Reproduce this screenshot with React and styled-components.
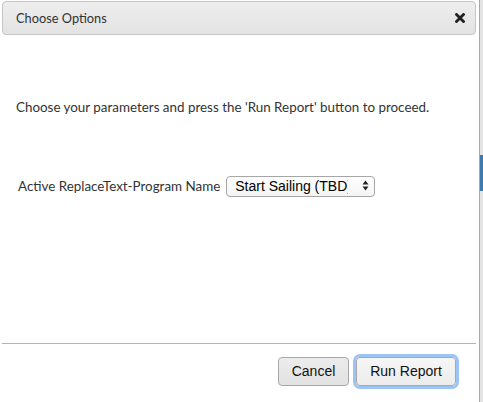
import React from 'react'
import styled, { createGlobalStyle } from 'styled-components'

const uiFont = `Lato, 'Noto Sans', sans-serif`
const systemFont = `'Liberation Sans', Arial, sans-serif`

const GlobalStyle = createGlobalStyle`
  html, body {
    margin: 0;
    padding: 0;
    background: #ffffff;
  }
  body {
    font-family: ${uiFont};
    color: #333333;
  }
`

const Screen = styled.div`
  display: flex;
  width: 483px;
  height: 402px;
  overflow: hidden;
`

const Dialog = styled.div`
  display: flex;
  flex-direction: column;
  width: 480px;
  height: 402px;
  border-right: 1px solid #a9a9a9;
  background: #ffffff;
  box-sizing: border-box;
`

const Backdrop = styled.div`
  flex: 1;
  display: flex;
  flex-direction: column;
  background: #e4e4e4;
`

const BackdropGap = styled.div`
  height: ${(p) => p.h}px;
`

const BackdropBar = styled.div`
  height: ${(p) => p.h}px;
  background: ${(p) => p.color};
`

const TitleBar = styled.div`
  display: flex;
  align-items: center;
  justify-content: space-between;
  height: 32px;
  margin: 1px 3px 0 2px;
  padding: 0 8px 0 13px;
  border: 1px solid #c6c6c6;
  border-radius: 4px;
  background: linear-gradient(#eeeeee, #e3e3e3);
`

const Title = styled.span`
  font-size: 12.8px;
  color: #333333;
`

const CloseButton = styled.button`
  display: flex;
  align-items: center;
  justify-content: center;
  width: 14px;
  height: 14px;
  padding: 0;
  border: 0;
  background: transparent;
  cursor: pointer;
`

const Content = styled.div`
  flex: 1;
  display: flex;
  flex-direction: column;
  gap: 60px;
  padding: 64px 16px 0 16px;
`

const Intro = styled.p`
  margin: 0;
  font-size: 13.4px;
  line-height: 16px;
  color: #333333;
`

const FieldRow = styled.div`
  display: flex;
  align-items: center;
  gap: 6px;
  padding-left: 2px;
`

const FieldLabel = styled.label`
  font-size: 13.4px;
  color: #333333;
`

const SelectWrap = styled.div`
  position: relative;
  width: 149px;
  height: 21px;
`

const Select = styled.select`
  appearance: none;
  width: 100%;
  height: 100%;
  padding: 0 26px 0 8px;
  border: 1px solid #a6a6a6;
  border-radius: 4px;
  background: linear-gradient(#ffffff, #f4f4f4);
  font-family: ${systemFont};
  font-size: 14px;
  color: #000000;
  box-sizing: border-box;
`

const SelectArrows = styled.svg`
  position: absolute;
  right: 6px;
  top: 5px;
  pointer-events: none;
`

const Footer = styled.div`
  display: flex;
  justify-content: flex-end;
  align-items: center;
  gap: 7px;
  height: 54px;
  padding-bottom: 4px;
  margin: 0 3px 0 2px;
  padding-right: 20px;
  border-top: 1px solid #b3b3b3;
`

const Button = styled.button`
  height: 29px;
  padding: 0;
  width: ${(p) => p.w}px;
  border: 1px solid #a8a8a8;
  border-radius: 4px;
  background: ${(p) => (p.primary ? 'linear-gradient(#f6f6f6, #ececec)' : 'linear-gradient(#ececec, #e2e2e2)')};
  box-shadow: ${(p) => (p.primary ? '0 0 0 3px #9cc4f4' : 'none')};
  font-family: ${systemFont};
  font-size: 14px;
  color: #111111;
  cursor: pointer;
`

const App = () => (
  <>
    <GlobalStyle />
    <Screen>
      <Dialog>
        <TitleBar>
          <Title>Choose Options</Title>
          <CloseButton aria-label="Close">
            <svg width="10" height="10" viewBox="0 0 10 10">
              <path d="M1.5 1.5 L8.5 8.5 M8.5 1.5 L1.5 8.5" stroke="#222" strokeWidth="2.8" strokeLinecap="square" />
            </svg>
          </CloseButton>
        </TitleBar>
        <Content>
          <Intro>Choose your parameters and press the 'Run Report' button to proceed.</Intro>
          <FieldRow>
            <FieldLabel htmlFor="program">Active ReplaceText-Program Name</FieldLabel>
            <SelectWrap>
              <Select id="program" defaultValue="start">
                <option value="start">Start Sailing (TBD)</option>
              </Select>
              <SelectArrows width="7" height="11" viewBox="0 0 7 11">
                <path d="M0.5 4.5 L3.5 0.5 L6.5 4.5 Z M0.5 6.5 L3.5 10.5 L6.5 6.5 Z" fill="#222" />
              </SelectArrows>
            </SelectWrap>
          </FieldRow>
        </Content>
        <Footer>
          <Button w={71}>Cancel</Button>
          <Button w={100} primary>Run Report</Button>
        </Footer>
      </Dialog>
      <Backdrop>
        <BackdropGap h={155} />
        <BackdropBar h={36} color="#3b7bb2" />
      </Backdrop>
    </Screen>
  </>
)

export default App
